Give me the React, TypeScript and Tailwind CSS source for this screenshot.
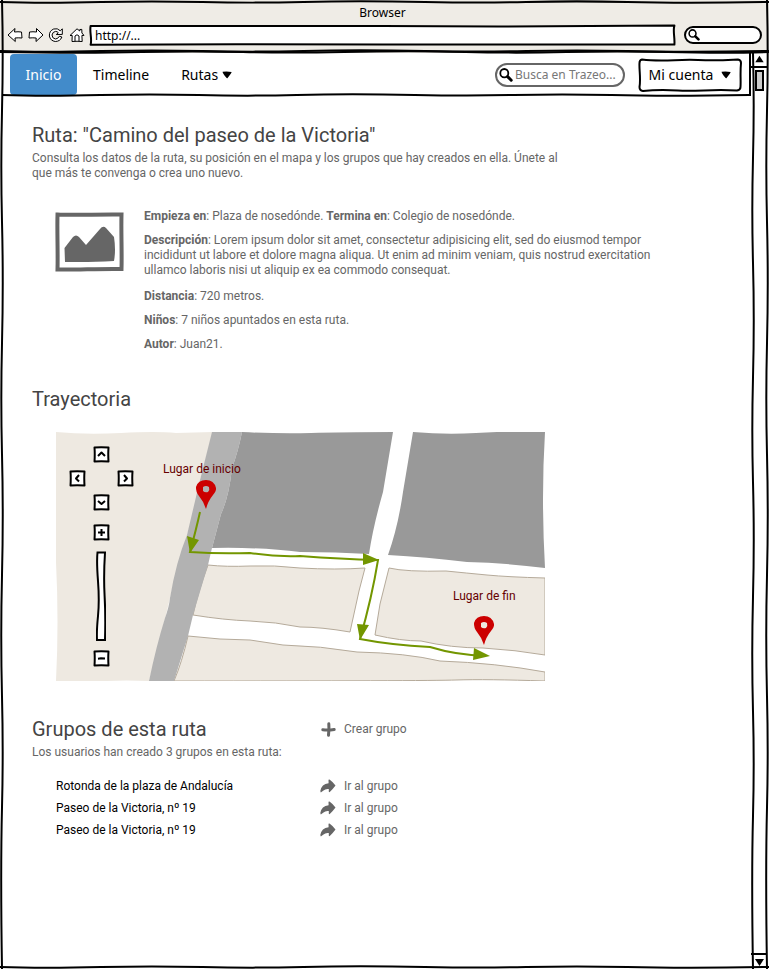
import React from "react";

function SketchBox({ className }: { className: string }) {
  return (
    <svg aria-hidden="true" viewBox="0 0 100 100" preserveAspectRatio="none" className={`pointer-events-none absolute inset-0 size-full overflow-visible ${className}`}>
      <path
        d="M.1 5C20 8 30 1 50 5S80 8 99.900 3C99.600 30 100 60 99.900 98 80 95 70 101 50 98S20 96 .1 99C.4 70 -.1 40 .1 5Z"
        strokeLinejoin="round"
        vectorEffect="non-scaling-stroke"
      />
    </svg>
  );
}

function Pill({ className }: { className: string }) {
  return <span aria-hidden="true" className={`pointer-events-none absolute inset-0 rounded-full border-2 ${className}`} />;
}

function HorizontalStroke({ className }: { className: string }) {
  return (
    <svg aria-hidden="true" viewBox="0 0 760 4" preserveAspectRatio="none" className={`pointer-events-none absolute inset-x-0 h-1 w-full overflow-visible ${className}`}>
      <path d="M0 2C30 3 60 3 100 2S160 1 200 2 260 3 300 2 370 1 420 2 480 3 520 2 580 1 620 2 700 3 760 2" fill="none" stroke="#000" strokeWidth="2" vectorEffect="non-scaling-stroke" />
    </svg>
  );
}

function VerticalStroke({ className }: { className: string }) {
  return (
    <svg aria-hidden="true" viewBox="0 0 4 960" preserveAspectRatio="none" className={`pointer-events-none absolute inset-y-0 h-full w-1 overflow-visible ${className}`}>
      <path d="M2 0C3 40 3 70 2 110S1 180 2 220 3 300 2 340 1 410 2 450 3 530 2 570 1 650 2 690 3 760 2 800 1 900 2 960" fill="none" stroke="#000" strokeWidth="2" vectorEffect="non-scaling-stroke" />
    </svg>
  );
}

function Magnifier({ className }: { className: string }) {
  return (
    <svg aria-hidden="true" viewBox="0 0 14 14" className={className} fill="none" stroke="#000" strokeLinecap="round">
      <ellipse cx="5.3" cy="5.2" rx="4" ry="4.2" strokeWidth="1.8" />
      <path d="M8.6 8.6 12.2 12.2" strokeWidth="3" />
    </svg>
  );
}

function Caret() {
  return (
    <svg aria-hidden="true" viewBox="0 0 10 8" className="h-2 w-[10px]">
      <path d="M.6.8Q5 .2 9.6 1 9.7 2 5.4 7.2 4.8 7.6 4.2 6.6.3 2 .6.8Z" />
    </svg>
  );
}

const TOOLBAR = [
  { label: "Atrás", path: "M1 8 8 1.5 7.5 5Q11 4.5 14.5 5L15 11Q11 10.600 8 11L8.300 14.500Z" },
  { label: "Adelante", path: "M15 8 8.500 1.500 8.500 5Q5 4.500 1.500 5L1 11Q5 10.600 8.200 11L8 14.500Z" },
  { label: "Recargar", path: "M12.3 3.8Q9.500.8 5.700 2 1 4 1.400 9 2.300 13.800 7.300 14.500 12.300 14.400 13.900 10L11.300 9.300Q10 12 7.300 12 4 11.300 4 8 4.500 4.800 7.500 4.400 9.300 4.400 10.300 5.700L8.300 7.500 14.300 7.400 14.300 1.800Z" },
  { label: "Inicio", path: "M1 8.500 8 1.800 10.800 4 10.800 2.500 12.800 2.400 12.900 6 15 8.400 12.900 8.500 13.200 14.500Q8 14 3 14.500L3.200 8.500ZM6 14.200 6 9Q8 6.500 10 9L10 14.200" },
];

const CONTROLS = [
  { label: "Mover arriba", place: "left-[37px] top-[14px]", path: "M5 10 8.500 6.500 12 10" },
  { label: "Mover a la izquierda", place: "left-[13px] top-[38px]", path: "M10 5 7 8.500 10 11.500" },
  { label: "Mover a la derecha", place: "left-[61px] top-[38px]", path: "M7 5 10 8.500 7 11.500" },
  { label: "Mover abajo", place: "left-[37px] top-[62px]", path: "M5 7 8.500 10 12 7" },
  { label: "Acercar", place: "left-[37px] top-[92px]", path: "M5 8.500H12M8.500 5V12" },
  { label: "Alejar", place: "left-[37px] top-[218px]", path: "M5 8.700 8 8.300 12 8.500" },
];

const PINS = [
  { label: "Lugar de inicio", text: "left-[107px] top-[30px]", marker: "left-[139px] top-[47px]" },
  { label: "Lugar de fin", text: "left-[397px] top-[157px]", marker: "left-[417px] top-[183px]" },
];

const GROUPS = ["Rotonda de la plaza de Andalucía", "Paseo de la Victoria, nº 19", "Paseo de la Victoria, nº 19"];

function BrowserBar() {
  return (
    <header className="relative h-[53px] bg-[#efece6] px-[7px] pt-[5px] font-['Noto_Sans',sans-serif]">
      <HorizontalStroke className="top-0" />
      <p className="pr-1 text-center text-black">Browser</p>
      <div className="mt-[5px] flex h-5 items-center">
        <div className="flex w-[78px] justify-between">
          {TOOLBAR.map((tool) => (
            <button key={tool.label} type="button" aria-label={tool.label}>
              <svg viewBox="0 0 16 16" className="size-4 fill-white stroke-black">
                <path d={tool.path} strokeLinejoin="round" />
              </svg>
            </button>
          ))}
        </div>
        <div className="relative ml-[5px] h-5 flex-1">
          <SketchBox className="fill-white stroke-black stroke-2" />
          <input aria-label="Dirección" defaultValue="http://..." className="relative block h-5 w-full bg-transparent px-[5px] text-black outline-none" />
        </div>
        <div className="relative ml-[9px] flex h-[18px] w-[78px] items-center pl-1 pr-2">
          <Pill className="border-black bg-white" />
          <Magnifier className="relative size-3" />
          <input aria-label="Buscar" className="relative h-4 min-w-0 flex-1 bg-transparent outline-none" />
        </div>
      </div>
      <HorizontalStroke className="bottom-0" />
      <HorizontalStroke className="-bottom-px -scale-x-100" />
    </header>
  );
}

function NavBar() {
  return (
    <nav className="relative flex h-[43px] items-center border-r-2 border-black pl-2 pr-[7px] font-['Noto_Sans',sans-serif] text-sm text-black">
      <a href="#inicio" className="flex h-[41px] w-[67px] items-center justify-center rounded bg-[#428bca] text-white">
        Inicio
      </a>
      <a href="#timeline" className="ml-4">Timeline</a>
      <button type="button" className="ml-8 flex items-center gap-1">
        Rutas <Caret />
      </button>
      <div className="relative ml-auto flex h-6 w-[130px] items-center gap-[2px] pl-1 pr-2">
        <Pill className="border-[#666] bg-white" />
        <Magnifier className="relative size-[14px] shrink-0" />
        <input aria-label="Busca en Trazeo" placeholder="Busca en Trazeo..." className="relative min-w-0 flex-1 bg-transparent text-xs outline-none placeholder:text-[#777]" />
      </div>
      <button type="button" className="relative ml-[13px] flex h-[34px] w-[104px] items-center justify-center gap-2">
        <svg aria-hidden="true" viewBox="0 0 104 34" className="absolute inset-0 size-full fill-white stroke-black stroke-2">
          <path d="M4 1.500C25 4 40 1 60 2S90 2 100 1.500Q103 2 103 5C102 15 103 22 102.500 29Q102.500 32 99 32.500C75 31 60 33.500 40 32.500S15 32 5 33Q1.500 32.500 1.500 29C3 20 1 12 1.500 5Q1.500 2 4 1.500Z" />
        </svg>
        <span className="relative">Mi cuenta</span>
        <span className="relative"><Caret /></span>
      </button>
      <HorizontalStroke className="-bottom-px" />
    </nav>
  );
}

function RouteMap() {
  return (
    <div className="relative ml-6 mt-[21px] h-[249px] w-[489px]">
      <svg viewBox="0 0 489 249" className="size-full" role="img" aria-label="Mapa de la ruta">
        <path d="M0 0Q30 3 65 1T120 1L157 0 144 48Q140 75 131 103T114 166 93 249Q70 248 50 249T0 249Q3 190 0 130T0 0Z" fill="#eee9e1" />
        <g fill="#eee9e1" stroke="#b5aa9a">
          <path d="M152 133Q170 135 194 134T244 136Q280 138 309 136L303 159 294 200Q265 195 244 195 220 190 194 189T137 183Q142 160 152 133Z" />
          <path d="M333 136Q350 140 390 139 410 141 431 143T489 146V223Q460 218 427 216 395 216 365 209 345 209 319 203L324 172Z" />
          <path d="M132 204Q165 208 194 208L227 213Q265 214 301 220 350 221 384 229 440 231 489 240V249Q430 247 400 248T118 249Q126 230 132 204Z" />
        </g>
        <path d="M156 0H186Q182 20 176 36 173 65 165 82L156 116 152 133 137 183 132 204 118 249H93Q100 215 109 186 113 175 114 166 120 130 131 103L144 48Z" fill="#b2b2b2" />
        <g fill="#999">
          <path d="M186 0Q225 2 255 1T337 0L327 60Q317 95 313 122 280 120 244 120 205 115 156 116L165 82Q173 65 176 36 182 20 186 0Z" />
          <path d="M357 0Q390 3 420 1T489 0Q485 65 489 136 450 131 411 130 370 125 332 123 342 95 347 60 352 30 357 0Z" />
        </g>
        <g fill="none" stroke="#739600" strokeWidth="2">
          <path d="M144 80Q140 98 134 120 162 122 194 121 220 125 244 124 285 127 322 128 316 165 304 207 335 213 374 215 400 223 430 224" />
        </g>
        <g fill="#739600">
          <path d="M131 104 143 108 134 121ZM307 121 323 128 307 133ZM301 192 313 193 304 208ZM418 216 434 224 417 228Z" />
        </g>
      </svg>
      {PINS.map((pin) => (
        <React.Fragment key={pin.label}>
          <span className={`absolute whitespace-nowrap text-[#600] ${pin.text}`}>{pin.label}</span>
          <svg aria-hidden="true" viewBox="0 0 22 31" className={`absolute h-[31px] w-[22px] ${pin.marker}`}>
            <path fill="#c00" fillRule="evenodd" d="M11 1Q3 1 1 8 .7 13 4 17 9 23 11 30 13 22 18 16 21.500 12 21 9 19 1 11 1ZM8 8Q11 6 14 8 15 11 13 13 10 14 8 12Z" />
          </svg>
        </React.Fragment>
      ))}
      {CONTROLS.map((control) => (
        <button key={control.label} type="button" aria-label={control.label} className={`absolute size-[17px] ${control.place}`}>
          <svg viewBox="0 0 17 17" className="size-full fill-white stroke-black stroke-2" strokeLinejoin="round">
            <path d="M1.500 1.500Q8 .8 15.500 1.500 15 8 15.500 15.500 8 15 1.500 15.500 2 8 1.500 1.500Z" />
            <path d={control.path} fill="none" />
          </svg>
        </button>
      ))}
      <div className="absolute left-10 top-[119px] h-[90px] w-[10px]">
        <svg aria-hidden="true" viewBox="0 0 10 90" className="size-full fill-white stroke-black stroke-2">
          <path d="M1.500 1.500 9 1.500Q7.500 25 8.600 45T9 89L1 89Q.5 80 2 65T2 30 1.500 1.500Z" />
        </svg>
        <input type="range" aria-label="Nivel de zoom" className="absolute inset-0 size-full opacity-0 [writing-mode:vertical-lr]" />
      </div>
    </div>
  );
}

function Groups() {
  return (
    <section className="mt-9">
      <div className="flex items-center">
        <h2 className="w-[289px] text-xl leading-6 text-[#444]">Grupos de esta ruta</h2>
        <button type="button" className="flex items-center gap-2">
          <svg aria-hidden="true" viewBox="0 0 15 15" className="size-[15px] fill-none stroke-[#666] stroke-3" strokeLinecap="round">
            <path d="M1.800 7.800Q7 8.500 13.200 7.500M7.800 1.800Q8.300 7 7.500 13.200" />
          </svg>
          Crear grupo
        </button>
      </div>
      <p className="mt-1">Los usuarios han creado 3 grupos en esta ruta:</p>
      <ul className="ml-6 mt-[15px]">
        {GROUPS.map((name, index) => (
          <li key={index} className="flex h-[22px] items-center">
            <span className="w-[264px] text-black">{name}</span>
            <a href="#grupo" className="flex items-center gap-2">
              <svg aria-hidden="true" viewBox="0 0 16 14" className="h-[14px] w-4 fill-[#666]">
                <path d="M8.500 .8 9.500.5Q13 3 15.500 6.500 13 10 9.500 13.200L8.800 12.800 8.800 10Q5.500 9.500 3.500 11.500L.8 13.500.3 12Q1.500 5 8.600 4.200Z" />
              </svg>
              Ir al grupo
            </a>
          </li>
        ))}
      </ul>
    </section>
  );
}

function ScrollBar() {
  return (
    <aside aria-hidden="true" className="relative flex w-4 flex-col items-center">
      <VerticalStroke className="left-0" />
      <svg viewBox="0 0 14 14" className="h-[13px] w-[14px]"><path d="M3 10 7.500 3 12 10Z" /></svg>
      <span className="h-[2px] w-full bg-black" />
      <span className="ml-px mt-[2px] h-[21px] w-[9px] border-2 border-black bg-[#ccc]" />
      <span className="mt-auto h-[2px] w-full bg-black" />
      <svg viewBox="0 0 14 14" className="h-[14px] w-[14px]"><path d="M3 4H12L7.500 11Z" /></svg>
    </aside>
  );
}

export default function App() {
  return (
    <div className="relative flex min-h-screen flex-col bg-white font-[Roboto,'Noto_Sans',sans-serif] text-xs leading-[15px] text-[#666]">
      <BrowserBar />
      <div className="flex flex-1 px-[2px]">
        <div className="min-w-0 flex-1">
          <NavBar />
          <main className="px-[30px] pb-8 pt-[27px]">
            <h1 className="text-xl leading-6 text-[#444]">Ruta: "Camino del paseo de la Victoria"</h1>
            <p className="mt-1">
              Consulta los datos de la ruta, su posición en el mapa y los grupos que hay creados en ella. Únete al
              <br />
              que más te convenga o crea uno nuevo.
            </p>
            <section className="ml-[23px] mt-7 flex gap-5">
              <svg role="img" aria-label="Imagen de la ruta" viewBox="0 0 69 60" className="mt-[3px] h-[60px] w-[69px] shrink-0">
                <path d="M2.500 2.500C20 3.500 45 2 66.500 2.500 66 20 67 40 66.500 57 45 56.500 20 58 2.500 57.500 3 40 2 20 2.500 2.500Z" fill="white" stroke="#666" strokeWidth="4" />
                <path d="M9.500 36 18 25Q21 22 24 25L31 33 45 17Q48 13 51 16L59 25Q61 38 59 49 40 50 25 50L10 50Z" fill="#666" />
              </svg>
              <div>
                <p><b>Empieza en</b>: Plaza de nosedónde. <b>Termina en</b>: Colegio de nosedónde.</p>
                <p className="mt-[9px]">
                  <b>Descripción</b>: Lorem ipsum dolor sit amet, consectetur adipisicing elit, sed do eiusmod tempor
                  <br />
                  incididunt ut labore et dolore magna aliqua. Ut enim ad minim veniam, quis nostrud exercitation
                  <br />
                  ullamco laboris nisi ut aliquip ex ea commodo consequat.
                </p>
                <p className="mt-[11px]"><b>Distancia</b>: 720 metros.</p>
                <p className="mt-[9px]"><b>Niños</b>: 7 niños apuntados en esta ruta.</p>
                <p className="mt-[9px]"><b>Autor</b>: Juan21.</p>
              </div>
            </section>
            <section className="mt-[35px]">
              <h2 className="text-xl leading-6 text-[#444]">Trayectoria</h2>
              <RouteMap />
            </section>
            <Groups />
          </main>
        </div>
        <ScrollBar />
      </div>
      <VerticalStroke className="left-0" />
      <VerticalStroke className="right-0" />
      <HorizontalStroke className="bottom-0" />
    </div>
  );
}
